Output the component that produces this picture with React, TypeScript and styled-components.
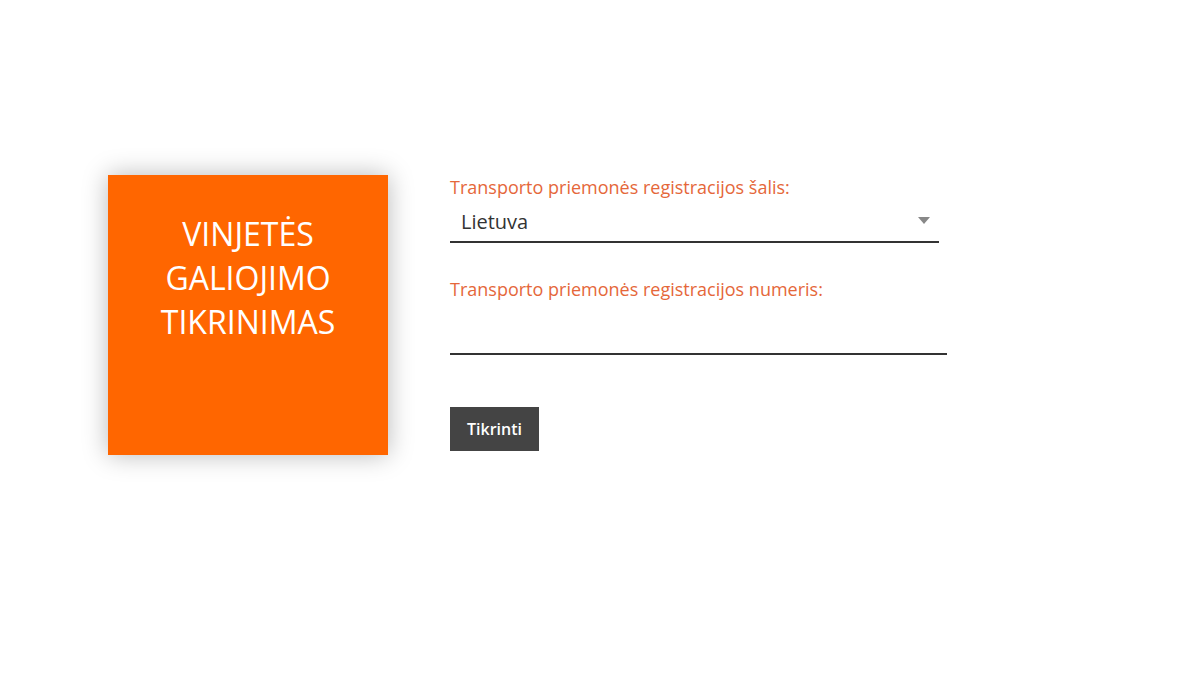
import styled, { createGlobalStyle } from 'styled-components';

const GlobalStyle = createGlobalStyle`
  html, body {
    margin: 0;
    padding: 0;
    background: #fff;
    font-family: "Open Sans", "Noto Sans", sans-serif;
  }
`;

export default function App() {
  return (
    <>
      <GlobalStyle />
      <Page>
        <TitleCard>
          <Title>
            VINJETĖS
            <br />
            GALIOJIMO
            <br />
            TIKRINIMAS
          </Title>
        </TitleCard>

        <Form>
          <Field>
            <Label>Transporto priemonės registracijos šalis:</Label>
            <SelectBox $width={489}>
              <SelectValue>Lietuva</SelectValue>
              <Arrow />
            </SelectBox>
          </Field>

          <Field>
            <Label>Transporto priemonės registracijos numeris:</Label>
            <TextInput $width={497} />
          </Field>

          <SubmitButton>Tikrinti</SubmitButton>
        </Form>
      </Page>
    </>
  );
}

const Page = styled.div`
  display: flex;
  align-items: flex-start;
  gap: 62px;
  padding: 175px 0 0 108px;
  min-height: 675px;
  box-sizing: border-box;
`;

const TitleCard = styled.div`
  flex: none;
  width: 280px;
  height: 280px;
  background: #ff6600;
  box-shadow: 0 0 24px rgba(0, 0, 0, 0.28);
  display: flex;
  justify-content: center;
  padding-top: 37px;
  box-sizing: border-box;
`;

const Title = styled.h1`
  margin: 0;
  color: #fff;
  font-weight: 400;
  font-size: 32px;
  line-height: 44px;
  text-align: center;
`;

const Form = styled.div`
  display: flex;
  flex-direction: column;
  align-items: flex-start;
`;

const Field = styled.div`
  display: flex;
  flex-direction: column;
  margin-bottom: 34px;
`;

const Label = styled.label`
  color: #e5673a;
  font-size: 18px;
  line-height: 24px;
`;

const SelectBox = styled.div<{ $width: number }>`
  display: flex;
  align-items: center;
  justify-content: space-between;
  width: ${({ $width }) => $width}px;
  height: 44px;
  padding: 2px 9px 0 11px;
  box-sizing: border-box;
  border-bottom: 2px solid #333;
`;

const SelectValue = styled.span`
  font-size: 20px;
  color: #333;
`;

const Arrow = styled.span`
  width: 0;
  height: 0;
  margin-top: -1px;
  border-left: 6px solid transparent;
  border-right: 6px solid transparent;
  border-top: 7px solid #888;
`;

const TextInput = styled.input<{ $width: number }>`
  width: ${({ $width }) => $width}px;
  height: 54px;
  border: none;
  border-bottom: 2px solid #333;
  outline: none;
  padding: 0 11px;
  box-sizing: border-box;
  font: inherit;
  font-size: 20px;
  background: transparent;
`;

const SubmitButton = styled.button`
  margin-top: 18px;
  width: 89px;
  height: 44px;
  border: none;
  background: #444;
  color: #fff;
  font-family: inherit;
  font-size: 16px;
  font-weight: 600;
  cursor: pointer;
`;
